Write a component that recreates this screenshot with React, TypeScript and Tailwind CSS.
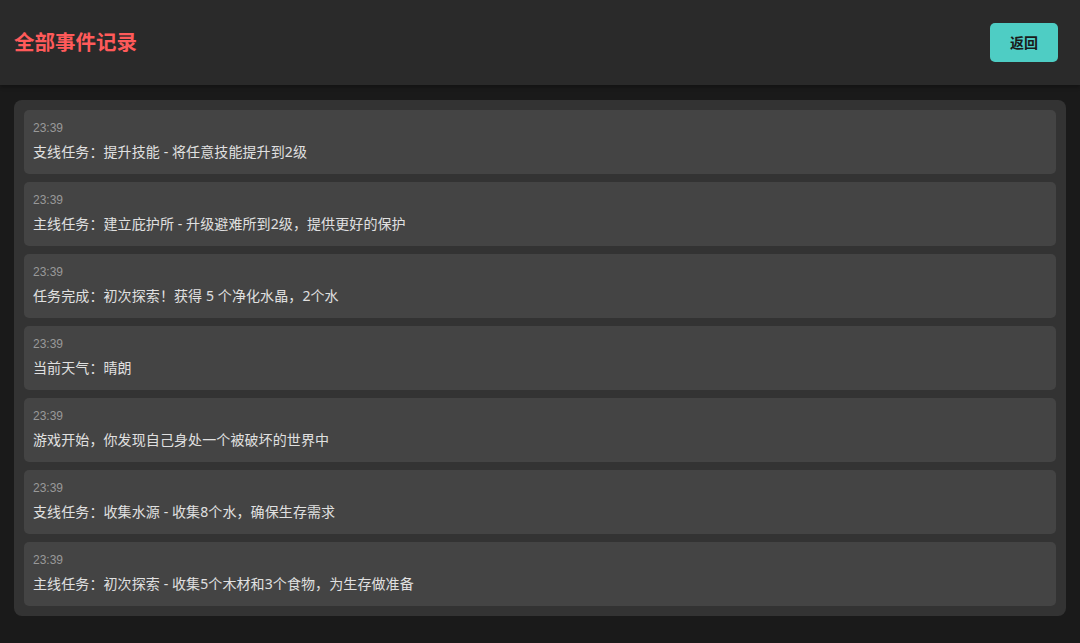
const events = [
  "支线任务：提升技能 - 将任意技能提升到2级",
  "主线任务：建立庇护所 - 升级避难所到2级，提供更好的保护",
  "任务完成：初次探索！获得 5 个净化水晶，2个水",
  "当前天气：晴朗",
  "游戏开始，你发现自己身处一个被破坏的世界中",
  "支线任务：收集水源 - 收集8个水，确保生存需求",
  "主线任务：初次探索 - 收集5个木材和3个食物，为生存做准备",
];

export default function App() {
  return (
    <div
      className="min-h-[643px] bg-[#1a1a1a]"
      style={{ fontFamily: '"Noto Sans", "Noto Sans CJK SC", sans-serif' }}
    >
      <header className="flex h-[85px] items-center justify-between bg-[#2a2a2a] pl-[14px] pr-[22px] shadow-[0_2px_4px_rgba(0,0,0,0.3)]">
        <h1 className="text-[20.5px] font-bold text-[#ff5a5a]">全部事件记录</h1>
        <button className="h-[39px] w-[68px] rounded-[5px] bg-[#4ecdc4] text-[14px] font-bold text-[#1a1a1a]">
          返回
        </button>
      </header>
      <main className="px-[14px] pt-[15px]">
        <div className="flex flex-col gap-[8px] rounded-[8px] bg-[#333333] p-[10px]">
          {events.map((msg, i) => (
            <div key={i} className="h-[64px] rounded-[5px] bg-[#444444] px-[9px] pt-[9px]">
              <div className="text-[12px] leading-[18px] text-[#999999]" style={{ fontFamily: '"Liberation Sans", "Noto Sans CJK SC", sans-serif' }}>23:39</div>
              <div className="mt-[4px] text-[14px] leading-[21px] tracking-[0.1px] text-[#e0e0e0]">{msg}</div>
            </div>
          ))}
        </div>
      </main>
    </div>
  );
}
